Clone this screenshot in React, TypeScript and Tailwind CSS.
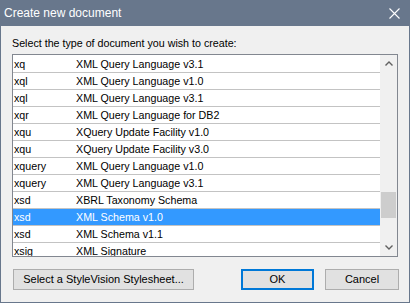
import * as React from "react";

type DocType = {
  ext: string;
  name: string;
  selected?: boolean;
};

const docTypes: DocType[] = [
  { ext: "xq", name: "XML Query Language v3.1" },
  { ext: "xql", name: "XML Query Language v1.0" },
  { ext: "xql", name: "XML Query Language v3.1" },
  { ext: "xqr", name: "XML Query Language for DB2" },
  { ext: "xqu", name: "XQuery Update Facility v1.0" },
  { ext: "xqu", name: "XQuery Update Facility v3.0" },
  { ext: "xquery", name: "XML Query Language v1.0" },
  { ext: "xquery", name: "XML Query Language v3.1" },
  { ext: "xsd", name: "XBRL Taxonomy Schema" },
  { ext: "xsd", name: "XML Schema v1.0", selected: true },
  { ext: "xsd", name: "XML Schema v1.1" },
  { ext: "xsig", name: "XML Signature" },
];

function Chevron({ down }: { down?: boolean }) {
  return (
    <svg width="8" height="5" viewBox="0 0 8 5" className={down ? "rotate-180" : ""}>
      <path d="M0.5 4.5 L4 1 L7.5 4.5" fill="none" stroke="#606060" strokeWidth="1.4" />
    </svg>
  );
}

export default function App() {
  return (
    <div className="flex h-[303px] w-[410px] flex-col overflow-hidden bg-[#f0f0f0] font-['Liberation_Sans',Arial,sans-serif]">
      {/* title bar */}
      <div className="flex h-[26px] shrink-0 items-center justify-between bg-[#68778c] pl-[4px] pr-[10px]">
        <span className="text-[12px] leading-none text-white">Create new document</span>
        <svg width="11" height="11" viewBox="0 0 11 11">
          <path d="M0.5 0.5 L10.5 10.5 M10.5 0.5 L0.5 10.5" stroke="#ffffff" strokeWidth="1.1" />
        </svg>
      </div>

      <div className="flex flex-1 flex-col border-x border-b border-[#68778c] pl-[11px] pr-[11px] pt-[11px] pb-[12px]">
        <p className="mb-[4px] text-[10.7px] leading-[13px] text-black">
          Select the type of document you wish to create:
        </p>

        {/* list box */}
        <div className="flex h-[203px] w-[386px] border border-[#828790] bg-white">
          <div className="flex-1 overflow-hidden pt-[1px]">
            {docTypes.map((d, i) => (
              <div
                key={i}
                className={`flex h-[17px] border-b border-[#c3c3c3] pl-[1px] text-[10.7px] leading-[16px] ${
                  d.selected ? "bg-[#3399ff] text-white" : "text-black"
                }`}
              >
                <span className="w-[62px] shrink-0">{d.ext}</span>
                <span>{d.name}</span>
              </div>
            ))}
          </div>
          <div className="flex w-[17px] shrink-0 flex-col bg-[#f0f0f0]">
            <div className="flex h-[17px] items-center justify-center">
              <Chevron />
            </div>
            <div className="flex-1 px-[1px] pt-[120px]">
              <div className="h-[26px] bg-[#cdcdcd]" />
            </div>
            <div className="flex h-[17px] items-center justify-center">
              <Chevron down />
            </div>
          </div>
        </div>

        {/* buttons */}
        <div className="mt-[12px] flex ml-[1px] -mr-[1px] items-center text-[11px] text-black">
          <button className="h-[21px] w-[181px] border border-[#adadad] bg-[#e1e1e1] leading-none">
            Select a StyleVision Stylesheet...
          </button>
          <button className="ml-auto h-[21px] w-[73px] border-2 border-[#0078d7] bg-[#e1e1e1] leading-none">
            OK
          </button>
          <button className="ml-[11px] h-[21px] w-[74px] border border-[#adadad] bg-[#e1e1e1] leading-none">
            Cancel
          </button>
        </div>
      </div>
    </div>
  );
}
